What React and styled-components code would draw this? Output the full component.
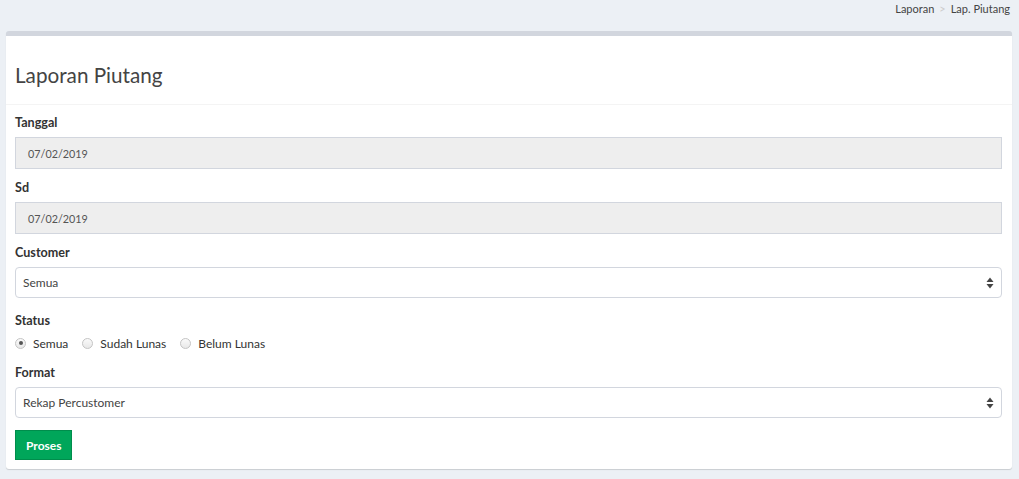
import React from "react";
import styled, { createGlobalStyle } from "styled-components";

const Global = createGlobalStyle`
  html, body { margin: 0; padding: 0; background: #ecf0f5; }
  body { font-family: "Lato", "Noto Sans", sans-serif; color: #333; }
  * { box-sizing: border-box; }
`;

const Page = styled.div`
  padding: 0 7px 0 6px;
  min-height: 479px;
`;

const Breadcrumb = styled.ol`
  list-style: none;
  margin: 0;
  padding: 2px 2px 0 0;
  height: 31px;
  display: flex;
  justify-content: flex-end;
  font-size: 11px;
  line-height: 14px;
  color: #444;
`;

const Crumb = styled.li`
  & + &::before {
    content: ">";
    color: #ccc;
    padding: 0 5px;
  }
`;

const Box = styled.div`
  background: #fff;
  border-top: 5px solid #d2d6de;
  border-radius: 3px;
  box-shadow: 0 1px 1px rgba(0, 0, 0, 0.15);
`;

const BoxHeader = styled.div`
  padding: 28px 9px 18px;
  border-bottom: 1px solid #f4f4f4;
`;

const Title = styled.h3`
  margin: 0;
  font-size: 20.7px;
  line-height: 22px;
  font-weight: 400;
  color: #444;
`;

const BoxBody = styled.div`
  padding: 9px 10px 9px 9px;
`;

const Group = styled.div`
  margin-bottom: ${(p) => p.$mb ?? 10}px;
`;

const Label = styled.label`
  display: block;
  font-size: 12.6px;
  font-weight: 700;
  line-height: 18px;
  margin-bottom: 5px;
  color: #333;
`;

const Input = styled.div`
  height: 32px;
  border: 1px solid #d2d6de;
  background: #eee;
  padding: 0 12px;
  display: flex;
  align-items: center;
  font-size: 10.8px;
  color: #555;
`;

const Select = styled.div`
  height: 31px;
  border: 1px solid #d2d6de;
  border-radius: 4px;
  background: #fff;
  padding: 0 7px;
  display: flex;
  align-items: center;
  justify-content: space-between;
  font-size: 12px;
  color: #444;
`;

const Arrows = () => (
  <svg width="8" height="12" viewBox="0 0 8 12">
    <path d="M4 0.5 L7.5 5 L0.5 5 Z" fill="#444" />
    <path d="M4 11.5 L7.5 7 L0.5 7 Z" fill="#444" />
  </svg>
);

const RadioRow = styled.div`
  height: 16px;
  display: flex;
  align-items: center;
  gap: 14px;
`;

const RadioItem = styled.label`
  display: flex;
  align-items: center;
  gap: 7px;
  font-size: 12px;
  color: #333;
`;

const Circle = styled.span`
  width: 11px;
  height: 11px;
  border-radius: 50%;
  border: 1px solid #c4c4c4;
  background: linear-gradient(#fafafa, #e8e8e8);
  display: inline-flex;
  align-items: center;
  justify-content: center;
  &::after {
    content: "";
    width: 4px;
    height: 4px;
    border-radius: 50%;
    background: ${(p) => (p.$checked ? "#555" : "transparent")};
  }
`;

const Button = styled.button`
  height: 30px;
  padding: 0 10px;
  border: 1px solid #008d4c;
  background: #00a65a;
  color: #fff;
  font-family: inherit;
  font-size: 12px;
  font-weight: 700;
  border-radius: 0;
  cursor: pointer;
`;

export default function App() {
  return (
    <>
      <Global />
      <Page>
        <Breadcrumb>
          <Crumb>Laporan</Crumb>
          <Crumb>Lap. Piutang</Crumb>
        </Breadcrumb>
        <Box>
          <BoxHeader>
            <Title>Laporan Piutang</Title>
          </BoxHeader>
          <BoxBody>
            <Group>
              <Label>Tanggal</Label>
              <Input>07/02/2019</Input>
            </Group>
            <Group $mb={10}>
              <Label>Sd</Label>
              <Input>07/02/2019</Input>
            </Group>
            <Group $mb={14}>
              <Label>Customer</Label>
              <Select>
                <span>Semua</span>
                <Arrows />
              </Select>
            </Group>
            <Group $mb={13}>
              <Label>Status</Label>
              <RadioRow>
                <RadioItem><Circle $checked />Semua</RadioItem>
                <RadioItem><Circle />Sudah Lunas</RadioItem>
                <RadioItem><Circle />Belum Lunas</RadioItem>
              </RadioRow>
            </Group>
            <Group $mb={12}>
              <Label>Format</Label>
              <Select>
                <span>Rekap Percustomer</span>
                <Arrows />
              </Select>
            </Group>
            <Button>Proses</Button>
          </BoxBody>
        </Box>
      </Page>
    </>
  );
}
